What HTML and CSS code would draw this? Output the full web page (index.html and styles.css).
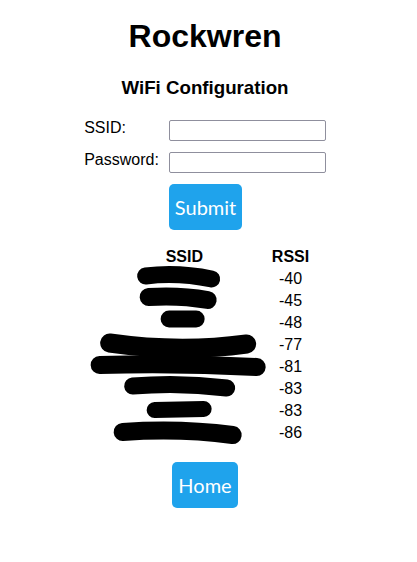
FILE: index.html
```html
<!DOCTYPE html>
<html>
<head>
<meta charset="utf-8">
<title>Rockwren</title>
<link rel="stylesheet" href="styles.css">
</head>
<body>
<h1 class="title">Rockwren</h1>
<h3 class="subtitle">WiFi Configuration</h3>
<form class="config">
  <label class="field-label" for="ssid">SSID:</label>
  <input class="field-input" id="ssid" type="text">
  <label class="field-label" for="pass">Password:</label>
  <input class="field-input" id="pass" type="password">
  <span></span>
  <button class="btn" type="button">Submit</button>
</form>
<div class="table-wrap">
  <table class="networks">
    <thead>
      <tr><th class="col-ssid">SSID</th><th>RSSI</th></tr>
    </thead>
    <tbody>
      <tr><td class="col-ssid"></td><td>-40</td></tr>
      <tr><td class="col-ssid"></td><td>-45</td></tr>
      <tr><td class="col-ssid"></td><td>-48</td></tr>
      <tr><td class="col-ssid"></td><td>-77</td></tr>
      <tr><td class="col-ssid"></td><td>-81</td></tr>
      <tr><td class="col-ssid"></td><td>-83</td></tr>
      <tr><td class="col-ssid"></td><td>-83</td></tr>
      <tr><td class="col-ssid"></td><td>-86</td></tr>
    </tbody>
  </table>
  <svg class="redactions" aria-hidden="true">
    <g transform="translate(-98.35,-245)" fill="#000" stroke="#000" stroke-linecap="round" stroke-linejoin="round">
      <path d="M146 276 Q178 272 212 279" fill="none" stroke-width="17"/>
      <path d="M149 297 Q180 295 208 300" fill="none" stroke-width="18"/>
      <path d="M169.5 319 L196.5 319" fill="none" stroke-width="17"/>
      <path d="M110 343 Q180 353 247 344" fill="none" stroke-width="19"/>
      <path d="M100 365 Q180 363 257 367" fill="none" stroke-width="18"/>
      <path d="M133 386 Q180 382 227 388" fill="none" stroke-width="17"/>
      <path d="M155 410 L204 409" fill="none" stroke-width="16"/>
      <path d="M123 432 Q180 428 233 435" fill="none" stroke-width="18"/>
    </g>
  </svg>
</div>
<div class="home-row">
  <a class="btn" href="#">Home</a>
</div>
</body>
</html>
```
FILE: styles.css
```css
body {
  margin: 0 15px 8px 8px;
  font-family: "Liberation Sans", Arial, sans-serif;
  font-size: 16px;
  color: #000;
  background: #fff;
  text-align: center;
}

.title {
  font-size: 32px;
  line-height: 37px;
  font-weight: bold;
  margin: 18px 0 22px;
}

.subtitle {
  font-size: 18.72px;
  line-height: 22px;
  font-weight: bold;
  margin: 0 0 21px;
}

.config {
  display: grid;
  grid-template-columns: auto 157px;
  justify-content: center;
  column-gap: 10px;
  row-gap: 11px;
  margin: 0 0 15px;
  text-align: left;
}

.field-label {
  line-height: 18px;
  margin-top: -1px;
}

.field-input {
  box-sizing: border-box;
  width: 157px;
  height: 21px;
  border: 1px solid #8f8f9d;
  border-radius: 2px;
  padding: 1px 2px;
  font-family: "Liberation Sans", Arial, sans-serif;
  font-size: 13.33px;
  margin: 0;
}

.btn {
  display: inline-block;
  box-sizing: border-box;
  background: #1fa3ec;
  color: #fff;
  border: 0;
  border-radius: 5px;
  font-family: Lato, "Open Sans", sans-serif;
  font-size: 20px;
  line-height: 24px;
  padding: 11px 6px;
  text-decoration: none;
  justify-self: start;
  margin: 0;
  cursor: pointer;
}

.table-wrap {
  position: relative;
  width: fit-content;
  margin: 0 auto;
}

.networks {
  margin: 0;
  border-spacing: 2px;
}

.networks th,
.networks td {
  padding: 1px;
  line-height: 18px;
  text-align: center;
}

.networks .col-ssid {
  width: 167px;
}

.redactions {
  position: absolute;
  left: 0;
  top: 0;
  width: 100%;
  height: 100%;
  overflow: visible;
  pointer-events: none;
}

.home-row {
  margin-top: 17px;
}
```
